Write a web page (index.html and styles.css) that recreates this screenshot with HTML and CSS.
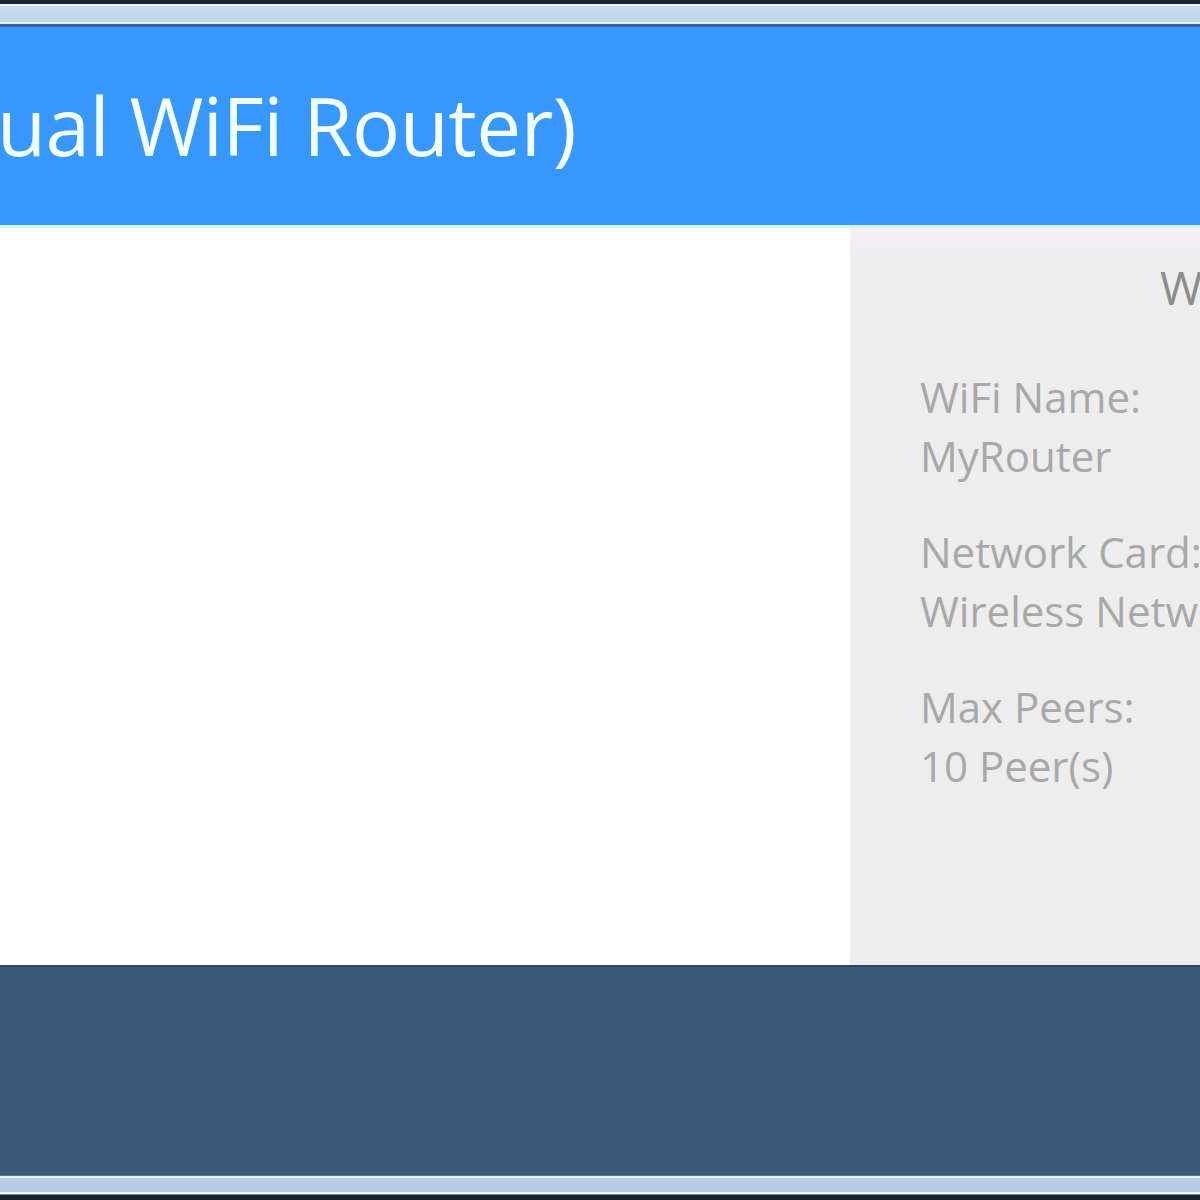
FILE: index.html
```
<!DOCTYPE html>
<html lang="en">
<head>
  <meta charset="UTF-8">
  <title>Virtual WiFi Router</title>
  <link rel="stylesheet" href="styles.css">
</head>
<body>
  <div class="window">
    <div class="frame frame-top"></div>

    <header class="titlebar">
      <div class="title-clip">
        <h1>MyRouter (Virtual WiFi Router)</h1>
      </div>
    </header>

    <main class="content">
      <section class="main-pane"></section>
      <aside class="info">
        <h2>WiFi Info</h2>
        <div class="info-item">
          <span class="label">WiFi Name:</span>
          <span class="value">MyRouter</span>
        </div>
        <div class="info-item">
          <span class="label">Network Card:</span>
          <span class="value">Wireless Network Connection</span>
        </div>
        <div class="info-item">
          <span class="label">Max Peers:</span>
          <span class="value">10 Peer(s)</span>
        </div>
      </aside>
    </main>

    <footer class="statusbar"></footer>

    <div class="frame frame-bottom"></div>
  </div>
</body>
</html>
```

FILE: styles.css
```
body {
  margin: 0;
  background-color: #1b2533;
  font-family: 'Open Sans', 'Noto Sans', sans-serif;
  overflow: hidden;
}

.window {
  width: 1200px;
  height: 1200px;
  display: flex;
  flex-direction: column;
  overflow: hidden;
}

.frame-top {
  height: 27px;
  background: linear-gradient(to bottom,
    #1b2533 0, #1b2533 4px,
    #eaf5fc 4px, #eaf5fc 6px,
    #c4daed 6px, #bfd6eb 22px,
    #e4f2fb 22px, #e4f2fb 24px,
    #3d5f80 24px, #2f6fb8 27px);
}

.titlebar {
  height: 198px;
  background-color: #3897fb;
  border-bottom: 3px solid #d4f8fb;
  display: flex;
  align-items: center;
}

.title-clip {
  width: 576px;
  overflow: hidden;
  display: flex;
  justify-content: flex-end;
}

.titlebar h1 {
  margin: 0 0 4px 0;
  white-space: nowrap;
  font-size: 80px;
  font-weight: normal;
  color: #f2ffff;
  letter-spacing: -0.5px;
}

.content {
  height: 737px;
  display: flex;
}

.main-pane {
  width: 850px;
  background-color: #ffffff;
}

.info {
  flex: 1;
  background: linear-gradient(to bottom, #f4f0f6 0, #ededed 40px);
  padding: 29px 0 0 70px;
  color: #a8a8a8;
  white-space: nowrap;
  overflow: hidden;
}

.info h2 {
  margin: 0 0 50px 240px;
  font-size: 46px;
  font-weight: normal;
  line-height: 60px;
  color: #8c8c8c;
}

.info-item {
  display: flex;
  flex-direction: column;
  margin-bottom: 37px;
  font-size: 42px;
  line-height: 59px;
}

.statusbar {
  height: 210px;
  background-color: #3a5878;
  border-top: 2px solid #2f4560;
  box-sizing: border-box;
}

.frame-bottom {
  height: 25px;
  background: linear-gradient(to bottom,
    #5b7491 0, #5b7491 1px,
    #e6f1fa 1px, #e6f1fa 3px,
    #b7cde3 3px, #b4cbe2 17px,
    #e8f3fb 17px, #e8f3fb 19px,
    #1c2430 20px);
}
```
